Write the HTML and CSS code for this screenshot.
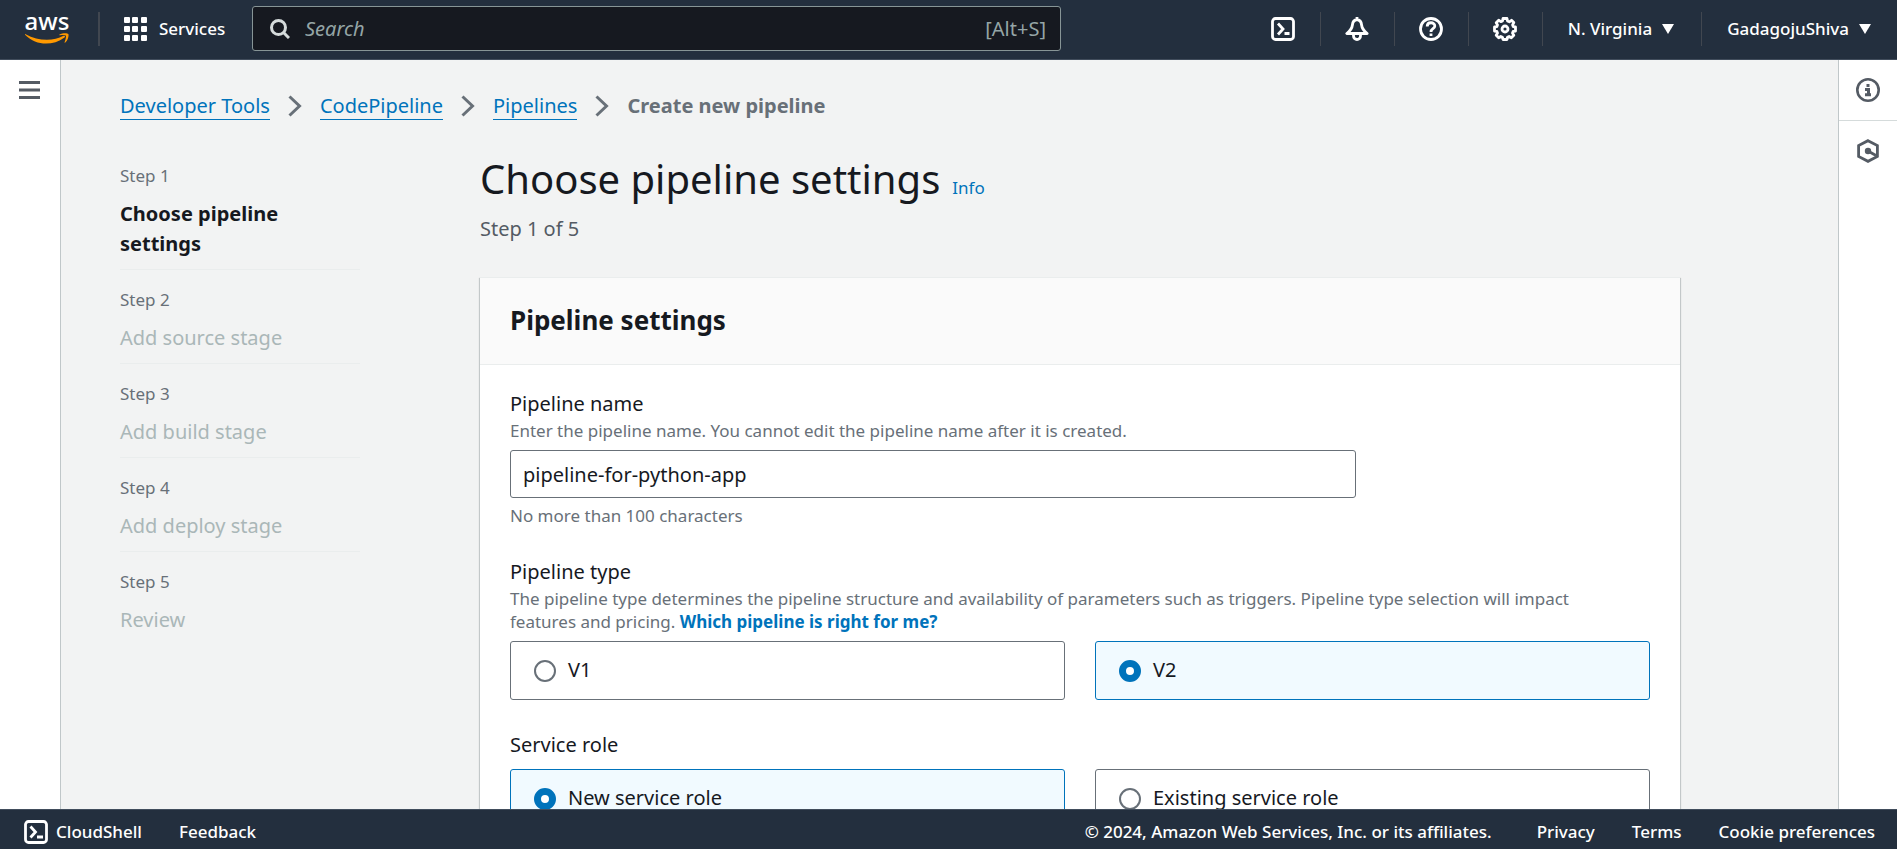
FILE: index.html
```html
<!DOCTYPE html>
<html lang="en">
<head>
<meta charset="utf-8">
<title>Create new pipeline</title>
<link rel="stylesheet" href="styles.css">
</head>
<body>
<div class="app">
  <header class="topbar">
    <a class="logo" href="#"><span class="logo-text">aws</span>
      <svg class="logo-smile" viewBox="0 0 44 12" width="46" height="12" aria-hidden="true"><path d="M.6 1.200C13 8 28 8.500 38.500 2.800c1.200-.5 2.200.7 1 1.600C27 13.500 11 12.500 .3 2c-.6-.6-.2-1.200.3-.8z" fill="#f90"/><path d="M34.500 1.500c3-1.800 8-1.600 8.800-.6.800 1.200-.3 6.300-3 8.600-.5.400-.9.200-.7-.3.800-2.200 1.800-5.600 1.200-6.500-.7-.9-4-.6-5.800-.4-.7 0-.9-.4-.5-.8z" fill="#f90"/></svg>
    </a>
    <span class="sep"></span>
    <button class="services" type="button">
      <svg viewBox="0 0 24 24" width="24" height="24" fill="#fff" aria-hidden="true"><rect x="1" width="6" height="6" rx="1"/><rect x="9" width="6" height="6" rx="1"/><rect x="18" width="6" height="6" rx="1"/><rect x="1" y="9" width="6" height="6" rx="1"/><rect x="9" y="9" width="6" height="6" rx="1"/><rect x="18" y="9" width="6" height="6" rx="1"/><rect x="1" y="18" width="6" height="6" rx="1"/><rect x="9" y="18" width="6" height="6" rx="1"/><rect x="18" y="18" width="6" height="6" rx="1"/></svg>
      <span>Services</span>
    </button>
    <label class="search">
      <svg viewBox="0 0 20 20" width="20" height="20" fill="none" stroke="#d5dbdb" stroke-width="3" aria-hidden="true"><circle cx="8.500" cy="8.500" r="7"/><path d="M13.500 13.500 19 19"/></svg>
      <input type="text" placeholder="Search" aria-label="Search">
      <span class="hint-key">[Alt+S]</span>
    </label>
    <nav class="tools">
      <button type="button" aria-label="CloudShell"><svg viewBox="0 0 24 24" width="24" height="24" fill="none" stroke="#fff" stroke-width="2.800" aria-hidden="true"><rect x="1.500" y="1.500" width="21" height="21" rx="3"/><path d="M7 6.500 12 12l-5 5.500M13.500 16.500h5"/></svg></button>
      <button type="button" aria-label="Notifications"><svg viewBox="0 0 24 24" width="24" height="24" fill="none" stroke="#fff" stroke-width="2.800" stroke-linejoin="round" aria-hidden="true"><path d="M12 2.500c-3 .5-4.300 2.500-4.600 5.500C7 12 5 14 1.800 16.500h20.400C19 14 17 12 16.600 8c-.3-3-1.600-5-4.600-5.500zM8.500 17v2a3.500 3.500 0 0 0 7 0v-2M12 0v3"/></svg></button>
      <button type="button" aria-label="Help"><svg viewBox="0 0 24 24" width="24" height="24" fill="none" stroke="#fff" stroke-width="2.800" aria-hidden="true"><circle cx="12" cy="12" r="10.500"/><path d="M8.200 9.500c0-5 7.600-4.800 7.600-.6 0 3-3.800 2.600-3.800 6M12 16.500v2.500"/></svg></button>
      <button type="button" aria-label="Settings"><svg viewBox="0 0 24 24" width="24" height="24" fill="none" stroke="#fff" stroke-width="2.800" stroke-linejoin="round" aria-hidden="true"><path d="M10 1.500h4l.5 2.500 1.800.8 2.200-1.500 2.300 2.300-1.200 2.300.7 1.700 2.200.4v4l-2.300.4-.7 1.700 1.300 2.200-2.500 2.500-2.200-1.300-1.700.7-.4 2.300h-4l-.5-2.300-1.700-.7-2.100 1.300-2.500-2.500 1.300-2.200-.7-1.700L1.500 14v-4l2.300-.4.700-1.700-1.300-2.200 2.500-2.500 2.100 1.400 1.700-.7z"/><circle cx="12" cy="12" r="3"/></svg></button>
      <button type="button" class="menu region">N. Virginia <span class="caret"></span></button>
      <button type="button" class="menu">GadagojuShiva <span class="caret"></span></button>
    </nav>
  </header>

  <div class="middle">
    <aside class="rail rail-left">
      <button type="button" aria-label="Open navigation"><svg viewBox="0 0 21 18" width="21" height="18" fill="#545b64" aria-hidden="true"><path d="M0 0h21v3H0zM0 7.500h21v3H0zM0 15h21v3H0z"/></svg></button>
    </aside>

    <main class="content">
      <nav class="crumbs" aria-label="Breadcrumbs">
        <a href="#">Developer Tools</a>
        <svg class="chev" viewBox="0 0 14 22" width="14" height="22"><path d="M1.500 1.500 11.500 11l-10 9.500"/></svg>
        <a href="#">CodePipeline</a>
        <svg class="chev" viewBox="0 0 14 22" width="14" height="22"><path d="M1.500 1.500 11.500 11l-10 9.500"/></svg>
        <a href="#">Pipelines</a>
        <svg class="chev" viewBox="0 0 14 22" width="14" height="22"><path d="M1.500 1.500 11.500 11l-10 9.500"/></svg>
        <span>Create new pipeline</span>
      </nav>
      <div class="wizard">
        <ol class="steps">
          <li class="current"><small>Step 1</small><span>Choose pipeline settings</span></li>
          <li><small>Step 2</small><span>Add source stage</span></li>
          <li><small>Step 3</small><span>Add build stage</span></li>
          <li><small>Step 4</small><span>Add deploy stage</span></li>
          <li><small>Step 5</small><span>Review</span></li>
        </ol>
        <form class="form">
          <div class="title-row"><h1>Choose pipeline settings</h1><a class="info" href="#">Info</a></div>
          <p class="progress">Step 1 of 5</p>
          <section class="panel">
            <h2>Pipeline settings</h2>
            <div class="panel-body">
              <div class="field">
                <label class="label" for="pname">Pipeline name</label>
                <p class="hint">Enter the pipeline name. You cannot edit the pipeline name after it is created.</p>
                <input class="text" id="pname" type="text" value="pipeline-for-python-app">
                <p class="hint below">No more than 100 characters</p>
              </div>
              <div class="field" role="radiogroup" aria-labelledby="ptype">
                <div class="label" id="ptype">Pipeline type</div>
                <p class="hint">The pipeline type determines the pipeline structure and availability of parameters such as triggers. Pipeline type selection will impact features and pricing. <a href="#">Which pipeline is right for me?</a></p>
                <div class="tiles">
                  <label class="tile"><input type="radio" name="ptype">V1</label>
                  <label class="tile"><input type="radio" name="ptype" checked>V2</label>
                </div>
              </div>
              <div class="field" role="radiogroup" aria-labelledby="srole">
                <div class="label role-label" id="srole">Service role</div>
                <div class="tiles">
                  <label class="tile tall"><input type="radio" name="role" checked>New service role</label>
                  <label class="tile tall"><input type="radio" name="role">Existing service role</label>
                </div>
              </div>
            </div>
          </section>
        </form>
      </div>
    </main>

    <aside class="rail rail-right">
      <button type="button" aria-label="Info panel"><svg viewBox="0 0 24 24" width="24" height="24" fill="none" stroke="#545b64" stroke-width="2.600" aria-hidden="true"><circle cx="12" cy="12" r="10.700"/><path d="M10.500 7.500h3M9 11.500h3.500v5M9 16.800h6" stroke-width="3"/></svg></button>
      <button type="button" aria-label="Tutorials"><svg viewBox="0 0 24 24" width="24" height="24" fill="none" stroke="#545b64" stroke-width="2.800" aria-hidden="true"><path d="M12 1.700 21.400 6.600v10.800L12 22.300l-9.400-4.900V6.600z"/><circle cx="12" cy="12" r="3.200" fill="#545b64" stroke="none"/><path d="m12 12 8 4.500"/></svg></button>
    </aside>
  </div>

  <footer class="footer">
    <button type="button"><svg viewBox="0 0 24 24" width="24" height="24" fill="none" stroke="#fff" stroke-width="2.800" aria-hidden="true"><rect x="1.500" y="1.500" width="21" height="21" rx="3"/><path d="M6.500 6.500 11.500 12l-5 5.500M13 17h6"/></svg>CloudShell</button>
    <a class="feedback" href="#">Feedback</a>
    <span class="copy">© 2024, Amazon Web Services, Inc. or its affiliates.</span>
    <a href="#">Privacy</a>
    <a href="#">Terms</a>
    <a href="#">Cookie preferences</a>
  </footer>
</div>
</body>
</html>
```

FILE: styles.css
```css
* { box-sizing: border-box; }
body { margin: 0; font-family: "Noto Sans", "Open Sans", sans-serif; font-size: 20px; line-height: 30px; color: #16191f; }
button, input { font: inherit; color: inherit; }
button { border: 0; background: none; padding: 0; cursor: pointer; }
svg { display: block; flex: none; }
a { color: #0073bb; text-decoration: none; }
h1, h2, p, ol { margin: 0; padding: 0; font-weight: 400; }

.app { display: flex; flex-direction: column; height: 100vh; overflow: hidden; }

.topbar { flex: none; display: flex; align-items: center; height: 60px; padding: 0 26px 2px 24px; background: #232f3e; border-bottom: 1px solid #414d5c; color: #fff; font-size: 17px; font-weight: 500; }
.logo { display: flex; flex-direction: column; align-items: center; width: 46px; color: #fff; }
.logo-text { font-size: 24px; line-height: 18px; height: 21px; }
.sep { width: 2px; height: 34px; background: #414750; margin: 0 23px 0 28px; }
.services { display: flex; align-items: center; gap: 12px; width: 129px; white-space: nowrap; font-weight: 500; }
.search { display: flex; align-items: center; gap: 15px; width: 809px; height: 45px; padding: 0 14px 0 17px; background: #161920; border: 1px solid #879596; border-radius: 3px; font-size: 20px; font-weight: 400; color: #95a5a6; }
.search input { flex: 1; min-width: 0; border: 0; background: none; outline: 0; padding: 0; }
.search input::placeholder { color: #95a5a6; font-style: italic; opacity: 1; }
.tools { display: flex; align-items: center; margin-left: auto; }
.tools button { display: flex; align-items: center; justify-content: center; width: 74px; height: 34px; border-left: 1px solid #414750; white-space: nowrap; font-weight: 500; }
.tools button:first-child { border: 0; }
.tools .menu { width: auto; gap: 10px; padding-left: 25px; }
.tools .region { padding-right: 27px; }
.caret { border: 6px solid transparent; border-top: 10px solid #fff; border-bottom: 0; }

.middle { flex: 1; display: flex; min-height: 0; }
.rail { flex: none; display: flex; flex-direction: column; background: #fff; }
.rail button { display: flex; align-items: center; justify-content: center; height: 60px; }
.rail-left { border-right: 1px solid #c0c7c9; width: 61px; padding-right: 1px; }
.rail-right { border-left: 1px solid #c0c7c9; width: 59px; }
.rail-right button + button { border-top: 1px solid #d5dbdb; }

.content { flex: 1; min-width: 0; overflow: hidden; background: #f2f3f3; padding: 31px 158px 0 59px; }
.crumbs { display: flex; align-items: center; gap: 18px; white-space: nowrap; }
.crumbs a { line-height: 26px; border-bottom: 1px solid #0073bb; }
.crumbs span { font-weight: 700; color: #687078; }
.chev { fill: none; stroke: #687078; stroke-width: 3; }
.wizard { display: flex; gap: 120px; margin-top: 30px; }
.steps { flex: none; width: 240px; padding-top: 10px; list-style: none; }
.steps li { padding-bottom: 10px; margin-bottom: 15px; border-bottom: 1px solid #eaeded; color: #aab7b8; }
.steps li:last-child { border: 0; }
.steps small { display: block; font-size: 17px; margin-bottom: 8px; color: #687078; }
.steps span { display: block; }
.steps .current span { font-weight: 700; color: #16191f; padding-right: 48px; }

.form { flex: 1; max-width: 1200px; min-width: 0; }
.title-row { display: flex; align-items: baseline; gap: 12px; }
h1 { font-size: 40px; line-height: 56px; }
.info { font-size: 17px; }
.progress { margin: 7px 0 33px; color: #545b64; }
.panel { background: #fff; border-top: 1px solid #eaeded; box-shadow: 0 1px 1px rgba(0, 28, 36, .3), 1px 1px 1px rgba(0, 28, 36, .15), -1px 1px 1px rgba(0, 28, 36, .15); }
h2 { height: 87px; padding: 26px 30px; background: #fafafa; border-bottom: 1px solid #eaeded; font-size: 26px; line-height: 32px; font-weight: 700; }
.panel-body { display: flex; flex-direction: column; gap: 30px; padding: 24px 30px; }
.label { display: block; line-height: 30px; }
.hint { max-width: 1110px; font-size: 17px; line-height: 23px; color: #687078; }
.hint a { font-weight: 700; }
.hint + .text, .hint + .tiles { margin-top: 8px; }
.below { margin-top: 6px; }
.text { display: block; width: 846px; max-width: 100%; height: 48px; padding: 0 12px; border: 1px solid #687078; border-radius: 3px; background: #fff; }
.tiles { display: grid; grid-template-columns: 1fr 1fr; gap: 30px; }
.tile { display: flex; align-items: flex-start; gap: 12px; height: 59px; padding: 13px 23px; border: 1px solid #687078; border-radius: 3px; }
.tall { height: 110px; }
.tile:has(:checked) { background: #f1faff; border-color: #0073bb; }
.tile input { appearance: none; flex: none; width: 22px; height: 22px; margin: 5px 0 0; border: 2px solid #687078; border-radius: 50%; background: #fff; }
.tile input:checked { border: 7px solid #0073bb; }
.role-label { margin-bottom: 9px; }

.footer { flex: none; display: flex; align-items: center; height: 40px; padding: 4px 22px 0 24px; gap: 37px; background: #232f3e; border-top: 1px solid #414d5c; color: #fff; font-size: 17px; font-weight: 500; white-space: nowrap; }
.footer a { color: #fff; }
.footer button { display: flex; align-items: center; gap: 8px; }
.copy { margin: 0 8px 0 auto; }
```
